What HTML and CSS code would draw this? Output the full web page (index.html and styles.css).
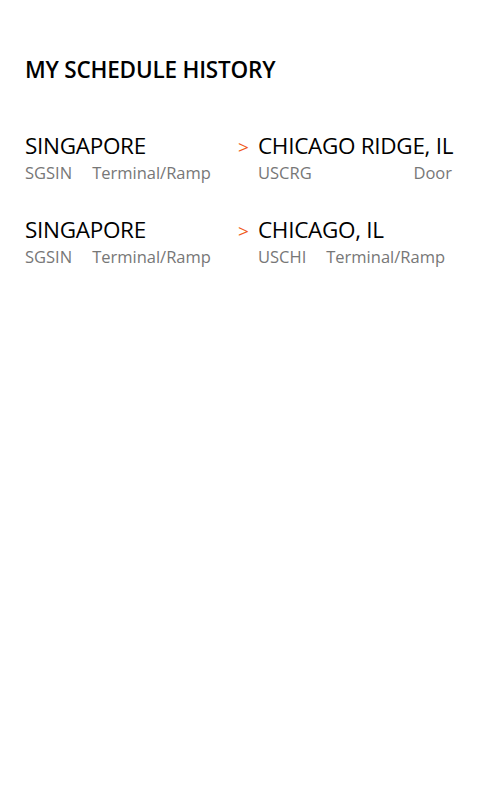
FILE: index.html
```html
<!DOCTYPE html>
<html lang="en">
<head>
  <meta charset="UTF-8" />
  <meta name="viewport" content="width=device-width, initial-scale=1" />
  <title>My Schedule History</title>
  <link rel="stylesheet" href="styles.css">
</head>
<body>

  <main class="page">
    <h1 class="page-title">MY SCHEDULE HISTORY</h1>

    <!-- schedule history list -->
    <ul class="history-list">
      <li class="history-item">
        <div class="point">
          <div class="city">SINGAPORE</div>
          <div class="meta">
            <span class="code">SGSIN</span>
            <span class="type">Terminal/Ramp</span>
          </div>
        </div>
        <span class="arrow">&gt;</span>
        <div class="point">
          <div class="city">CHICAGO RIDGE, IL</div>
          <div class="meta spread">
            <span class="code">USCRG</span>
            <span class="type">Door</span>
          </div>
        </div>
      </li>
      <li class="history-item">
        <div class="point">
          <div class="city">SINGAPORE</div>
          <div class="meta">
            <span class="code">SGSIN</span>
            <span class="type">Terminal/Ramp</span>
          </div>
        </div>
        <span class="arrow">&gt;</span>
        <div class="point">
          <div class="city">CHICAGO, IL</div>
          <div class="meta">
            <span class="code">USCHI</span>
            <span class="type">Terminal/Ramp</span>
          </div>
        </div>
      </li>
    </ul>
  </main>

</body>
</html>
```

FILE: styles.css
```css
* {
  box-sizing: border-box;
}
body {
  margin: 0;
  padding: 0;
  font-family: "Open Sans", "Noto Sans", sans-serif;
  background-color: #fff;
  color: #000;
  min-height: 100vh;
}

.page {
  padding: 54px 20px 0 25px;
}

.page-title {
  margin: 0;
  font-size: 22.5px;
  font-weight: 600;
  line-height: 32px;
  letter-spacing: -0.2px;
}

/* list of past routes */
.history-list {
  list-style: none;
  margin: 45px 0 0;
  padding: 0;
}

.history-item {
  display: flex;
  align-items: baseline;
  height: 84px;
}

.point {
  width: 213px;
}
.point:last-child {
  width: 194px;
}

.city {
  font-size: 22.5px;
  line-height: 30px;
  letter-spacing: -0.3px;
  white-space: nowrap;
}

.meta {
  display: flex;
  gap: 20px;
  font-size: 16.5px;
  line-height: 24px;
  color: #777;
  white-space: nowrap;
}
.meta.spread {
  justify-content: space-between;
}

.arrow {
  width: 20px;
  color: #f05a1a;
  font-size: 19px;
}
```
